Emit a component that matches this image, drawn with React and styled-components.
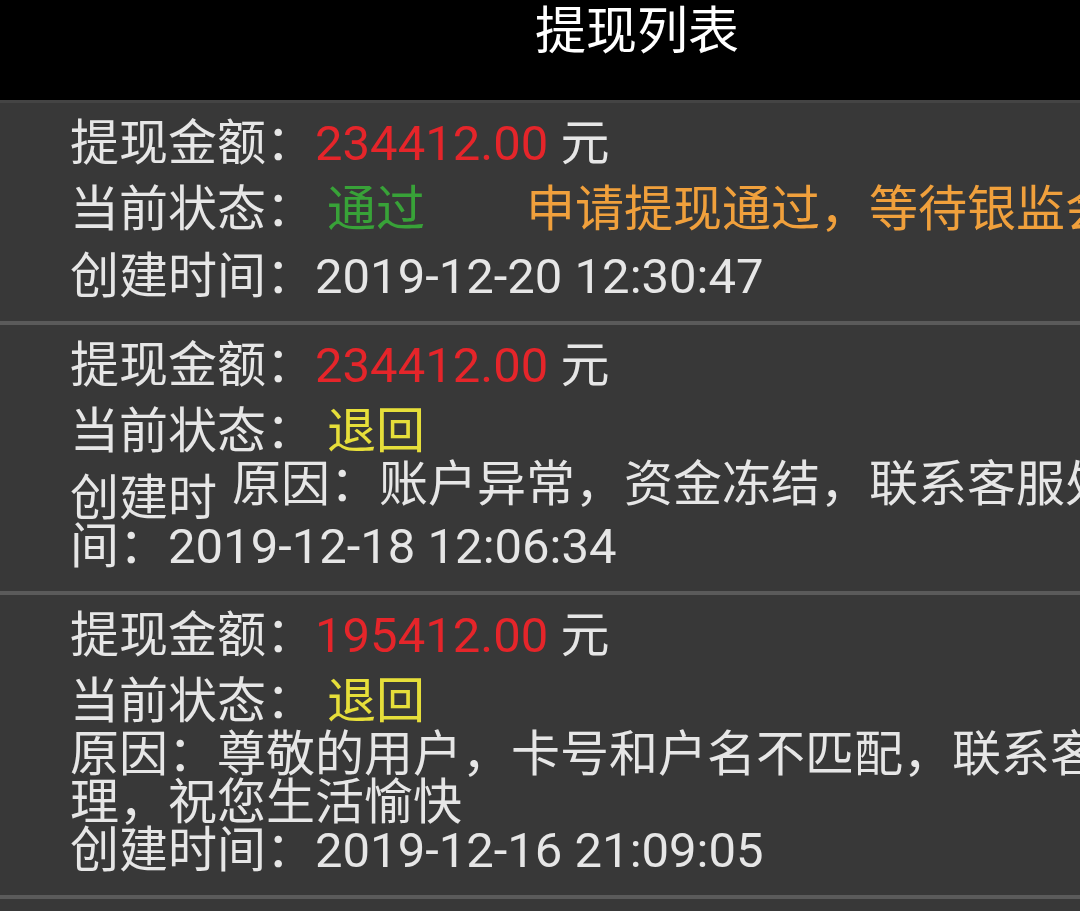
import React from "react";
import styled, { createGlobalStyle } from "styled-components";

const GlobalStyle = createGlobalStyle`
  html, body {
    margin: 0;
    padding: 0;
    background: #383838;
    overflow: hidden;
  }
  body {
    font-family: Roboto, "Noto Sans CJK SC", sans-serif;
  }
`;

const Page = styled.div`
  width: 1274px;
  min-height: 911px;
  background: #383838;
`;

const Header = styled.div`
  box-sizing: border-box;
  height: 100px;
  padding-top: 2px;
  background: #000;
  color: #fff;
  font-size: 51px;
  line-height: 60px;
  text-align: center;
`;

const List = styled.div`
  border-top: 3px solid #444;
`;

const Entry = styled.div`
  padding: 8px 62px 20px 70px;
  border-bottom: 4px solid #5a5a5a;
  font-size: 49px;
  color: #e6e6e6;
`;

const Row = styled.div`
  line-height: 66px;
`;

const Amount = styled.span`
  color: #e5252a;
`;

const Status = styled.span`
  margin-left: 12px;
  color: ${(p) => p.$color};
`;

const Note = styled.span`
  float: right;
  white-space: nowrap;
  color: #f0a03c;
`;

const Reason = styled.div`
  line-height: 48px;
  margin-top: -4px;
`;

const SideReason = styled.span`
  float: right;
  margin-top: -14px;
  white-space: nowrap;
  line-height: 48px;
`;

const Created = styled.div`
  line-height: 48px;
  margin-top: 10px;
  ${Reason} + & {
    margin-top: 0;
  }
`;

const entries = [
  {
    amount: "234412.00",
    status: "通过",
    color: "#38a238",
    note: "申请提现通过，等待银监会审核",
    created: "2019-12-20 12:30:47",
  },
  {
    amount: "234412.00",
    status: "退回",
    color: "#e6de3a",
    side: "原因：账户异常，资金冻结，联系客服处理。",
    created: "2019-12-18 12:06:34",
  },
  {
    amount: "195412.00",
    status: "退回",
    color: "#e6de3a",
    reason: "原因：尊敬的用户，卡号和户名不匹配，联系客服处理，祝您生活愉快",
    created: "2019-12-16 21:09:05",
  },
];

const App = () => {
  return (
    <Page>
      <GlobalStyle />
      <Header>提现列表</Header>
      <List>
        {entries.map((e, i) => (
          <Entry key={i}>
            <Row>
              提现金额：<Amount>{e.amount}</Amount> 元
            </Row>
            <Row>
              当前状态：<Status $color={e.color}>{e.status}</Status>
              {e.note && <Note>{e.note}</Note>}
            </Row>
            {e.reason && <Reason>{e.reason}</Reason>}
            <Created>
              {e.side && <SideReason>{e.side}</SideReason>}
              创建时间：{e.created}
            </Created>
          </Entry>
        ))}
      </List>
    </Page>
  );
};

export default App;
